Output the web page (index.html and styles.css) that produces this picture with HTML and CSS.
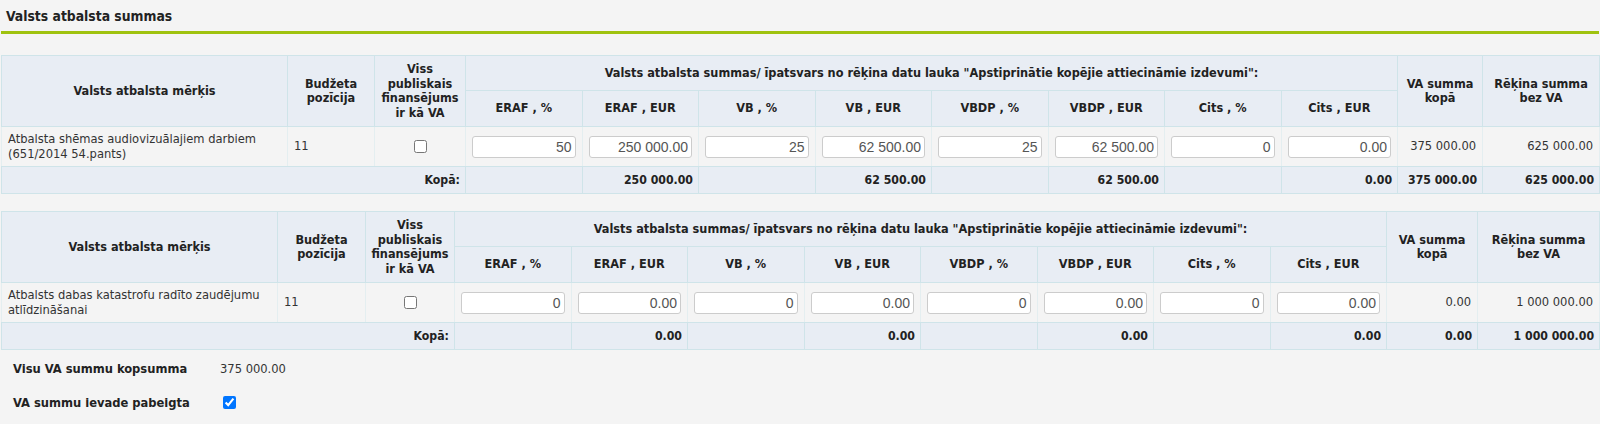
FILE: index.html
```html
<!DOCTYPE html>
<html lang="lv">
<head>
<meta charset="utf-8">
<title>Valsts atbalsta summas</title>
<link rel="stylesheet" href="styles.css">
</head>
<body>
<div class="page">
  <div class="panel-title">Valsts atbalsta summas</div>

  <table class="va-table t1">
    <colgroup>
      <col class="c-goal"><col class="c-budget"><col class="c-flag">
      <col class="c-sub"><col class="c-sub"><col class="c-sub"><col class="c-sub">
      <col class="c-sub"><col class="c-sub"><col class="c-sub"><col class="c-sub">
      <col class="c-va"><col class="c-inv">
    </colgroup>
    <thead>
      <tr class="h1">
        <th rowspan="2">Valsts atbalsta mērķis</th>
        <th rowspan="2">Budžeta pozīcija</th>
        <th rowspan="2">Viss publiskais finansējums ir kā VA</th>
        <th colspan="8">Valsts atbalsta summas/ īpatsvars no rēķina datu lauka "Apstiprinātie kopējie attiecināmie izdevumi":</th>
        <th rowspan="2">VA summa kopā</th>
        <th rowspan="2">Rēķina summa bez VA</th>
      </tr>
      <tr class="h2">
        <th>ERAF , %</th><th>ERAF , EUR</th><th>VB , %</th><th>VB , EUR</th>
        <th>VBDP , %</th><th>VBDP , EUR</th><th>Cits , %</th><th>Cits , EUR</th>
      </tr>
    </thead>
    <tbody>
      <tr class="data">
        <td class="goal">Atbalsta shēmas audiovizuālajiem darbiem (651/2014 54.pants)</td>
        <td>11</td>
        <td class="center"><input type="checkbox"></td>
        <td class="inp"><input type="text" value="50"></td>
        <td class="inp"><input type="text" value="250 000.00"></td>
        <td class="inp"><input type="text" value="25"></td>
        <td class="inp"><input type="text" value="62 500.00"></td>
        <td class="inp"><input type="text" value="25"></td>
        <td class="inp"><input type="text" value="62 500.00"></td>
        <td class="inp"><input type="text" value="0"></td>
        <td class="inp"><input type="text" value="0.00"></td>
        <td class="num">375 000.00</td>
        <td class="num">625 000.00</td>
      </tr>
      <tr class="total">
        <td colspan="3" class="num">Kopā:</td>
        <td></td><td class="num">250 000.00</td>
        <td></td><td class="num">62 500.00</td>
        <td></td><td class="num">62 500.00</td>
        <td></td><td class="num">0.00</td>
        <td class="num">375 000.00</td>
        <td class="num">625 000.00</td>
      </tr>
    </tbody>
  </table>

  <table class="va-table t2">
    <colgroup>
      <col class="c-goal"><col class="c-budget"><col class="c-flag">
      <col class="c-sub"><col class="c-sub"><col class="c-sub"><col class="c-sub">
      <col class="c-sub"><col class="c-sub"><col class="c-sub"><col class="c-sub">
      <col class="c-va"><col class="c-inv">
    </colgroup>
    <thead>
      <tr class="h1">
        <th rowspan="2">Valsts atbalsta mērķis</th>
        <th rowspan="2">Budžeta pozīcija</th>
        <th rowspan="2">Viss publiskais finansējums ir kā VA</th>
        <th colspan="8">Valsts atbalsta summas/ īpatsvars no rēķina datu lauka "Apstiprinātie kopējie attiecināmie izdevumi":</th>
        <th rowspan="2">VA summa kopā</th>
        <th rowspan="2">Rēķina summa bez VA</th>
      </tr>
      <tr class="h2">
        <th>ERAF , %</th><th>ERAF , EUR</th><th>VB , %</th><th>VB , EUR</th>
        <th>VBDP , %</th><th>VBDP , EUR</th><th>Cits , %</th><th>Cits , EUR</th>
      </tr>
    </thead>
    <tbody>
      <tr class="data">
        <td class="goal">Atbalsts dabas katastrofu radīto zaudējumu atlīdzināšanai</td>
        <td>11</td>
        <td class="center"><input type="checkbox"></td>
        <td class="inp"><input type="text" value="0"></td>
        <td class="inp"><input type="text" value="0.00"></td>
        <td class="inp"><input type="text" value="0"></td>
        <td class="inp"><input type="text" value="0.00"></td>
        <td class="inp"><input type="text" value="0"></td>
        <td class="inp"><input type="text" value="0.00"></td>
        <td class="inp"><input type="text" value="0"></td>
        <td class="inp"><input type="text" value="0.00"></td>
        <td class="num">0.00</td>
        <td class="num">1 000 000.00</td>
      </tr>
      <tr class="total">
        <td colspan="3" class="num">Kopā:</td>
        <td></td><td class="num">0.00</td>
        <td></td><td class="num">0.00</td>
        <td></td><td class="num">0.00</td>
        <td></td><td class="num">0.00</td>
        <td class="num">0.00</td>
        <td class="num">1 000 000.00</td>
      </tr>
    </tbody>
  </table>

  <div class="summary">
    <div class="label">Visu VA summu kopsumma</div>
    <div class="value">375 000.00</div>
    <div class="label">VA summu ievade pabeigta</div>
    <div class="value"><input type="checkbox" checked></div>
  </div>
</div>
</body>
</html>
```

FILE: styles.css
```css
html, body {
  margin: 0;
  padding: 0;
  background: #f4f4f4;
}

body {
  font-family: "DejaVu Sans Condensed", "DejaVu Sans", sans-serif;
  font-size: 12.8px;
  color: #333;
}

.page {
  padding: 0 1px;
  width: 1598px;
}

.panel-title {
  height: 31px;
  line-height: 32px;
  padding-left: 5px;
  font-size: 13.8px;
  font-weight: bold;
  color: #222;
  border-bottom: 3px solid #9fc20f;
}

.va-table {
  width: 1598px;
  table-layout: fixed;
  border-collapse: collapse;
  border: 1px solid #cfe4e9;
  line-height: 14.5px;
}

.t1 { margin-top: 21px; }
.t2 { margin-top: 17px; }

.t1 .c-goal { width: 286px; }
.t1 .c-budget { width: 87px; }
.t1 .c-flag { width: 91px; }
.t1 .c-va { width: 85px; }
.t1 .c-inv { width: 117px; }

.t2 .c-goal { width: 276px; }
.t2 .c-budget { width: 88px; }
.t2 .c-flag { width: 89px; }
.t2 .c-va { width: 91px; }
.t2 .c-inv { width: 122px; }

.c-sub { width: 116.5px; }

.va-table th {
  background: #e8edf4;
  border: 1px solid #cfe4e9;
  font-weight: bold;
  font-size: 12.6px;
  color: #222;
  text-align: center;
  vertical-align: middle;
  padding: 0 4px;
}

.va-table .h1 { height: 35px; }
.va-table .h2 { height: 36px; }

.va-table td {
  border: 1px solid #d6e8ec;
  padding: 0 6px;
  vertical-align: middle;
}

.va-table td.num { text-align: right; white-space: nowrap; }
.va-table td.center { text-align: center; }
.va-table td.goal { padding-left: 6px; padding-right: 2px; }

.va-table .data { height: 40px; background: #f4f4f4; }
.va-table .data td { border-color: #e4eef0; border-top-color: #cfe4e9; border-bottom-color: #cfe4e9; }

.va-table .total {
  height: 27px;
  background: #e8edf4;
  font-weight: bold;
  color: #222;
}
.va-table .total td { border-color: #cfe4e9; font-size: 12.2px; }
.va-table .total td.num { padding-right: 5px; }

.va-table td.inp { padding: 0 6px; }

.va-table input[type="text"] {
  box-sizing: border-box;
  width: 100%;
  height: 22px;
  margin: 0;
  padding: 0 3px;
  border: 1px solid #cccccc;
  border-radius: 3px;
  background: #fff;
  font-family: "Liberation Sans", Arial, sans-serif;
  font-size: 14px;
  color: #555;
  text-align: right;
  display: block;
}

input[type="checkbox"] {
  width: 13px;
  height: 13px;
  margin: 0;
  vertical-align: middle;
}

.summary {
  display: grid;
  grid-template-columns: 207px auto;
  grid-auto-rows: 34px;
  align-items: center;
  padding-left: 12px;
  margin-top: 1px;
}

.summary .label {
  font-weight: bold;
  color: #222;
}

.summary .value input { display: block; margin-left: 3px; }
```
